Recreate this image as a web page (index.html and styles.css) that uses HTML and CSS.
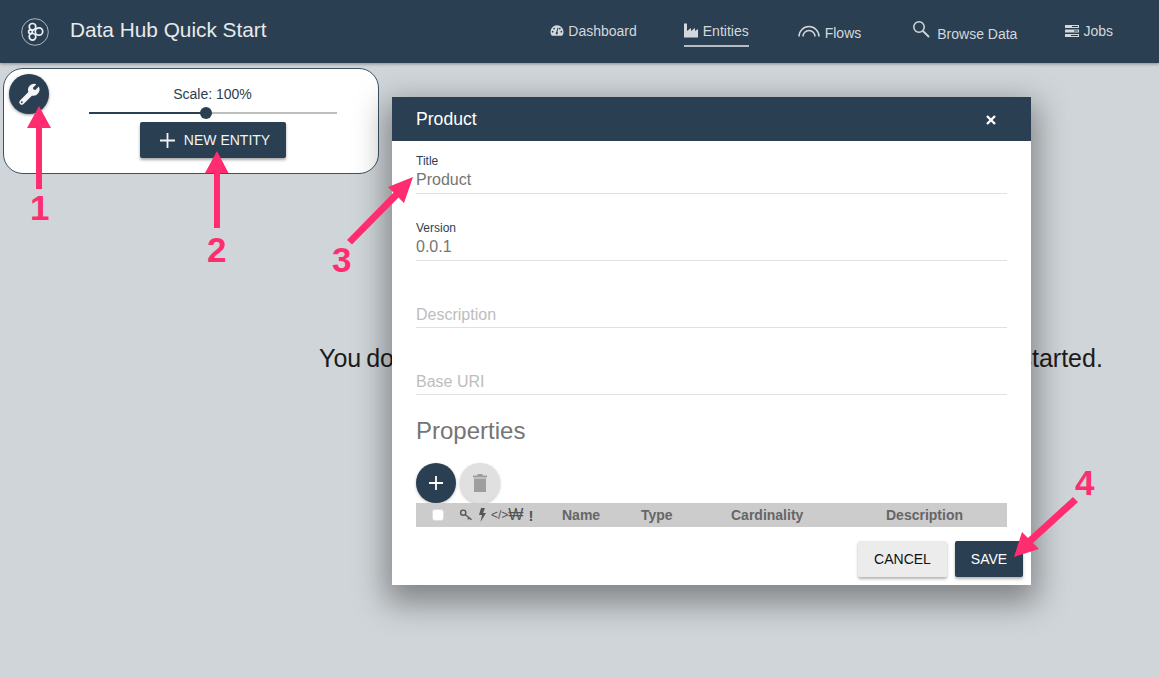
FILE: index.html
```html
<!DOCTYPE html>
<html lang="en">
<head>
<meta charset="utf-8">
<title>Data Hub Quick Start</title>
<link rel="stylesheet" href="styles.css">
</head>
<body>
<header class="topbar">
  <div class="brand">
    <svg class="logo" viewBox="0 0 28 28" width="28" height="28"><circle cx="14" cy="14" r="13.300" fill="none" stroke="#b9c2c9" stroke-width=".9"/><g fill="none" stroke="#eef0f2" stroke-width="1.700"><circle cx="11.500" cy="8.800" r="3.300"/><circle cx="18" cy="13.500" r="3.700"/><circle cx="11.500" cy="18.800" r="3.300"/><circle cx="9.500" cy="13.800" r="1.900"/></g></svg>
    <span class="brand-name">Data Hub Quick Start</span>
  </div>
  <nav class="nav">
    <a class="nav-item nav-dash"><svg viewBox="0 0 16 14" width="14" height="13"><path fill="#d4d8dc" d="M8 1a7.500 7.500 0 0 0-7.500 7.500c0 1.600.5 3.100 1.300 4.300.2.100.4.200.6.200h11.200c.2 0 .4-.1.6-.2.8-1.200 1.300-2.700 1.300-4.300A7.500 7.500 0 0 0 8 1zM3 9.400a1 1 0 1 1 0-2 1 1 0 0 1 0 2zm1.700-3.600a1 1 0 1 1 0-2 1 1 0 0 1 0 2zM8 11.500a1.500 1.500 0 0 1-.8-2.800l1.500-5 1 .3-1.300 4.800A1.500 1.500 0 0 1 8 11.500zm3.200-5.700a1 1 0 1 1 0-2 1 1 0 0 1 0 2zM13 9.400a1 1 0 1 1 0-2 1 1 0 0 1 0 2z"/></svg>Dashboard</a>
    <a class="nav-item nav-ent active"><svg viewBox="0 0 14 14" width="14" height="15"><path fill="#d4d8dc" d="M0 0h3v7.500l4-3v3l4-3v3l3-2V14H0z"/></svg>Entities</a>
    <a class="nav-item nav-flows"><svg viewBox="0 0 22 13" width="22" height="13"><g fill="none" stroke="#d4d8dc" stroke-width="1.500"><path d="M1 12.500a10 10 0 0 1 20 0"/><path d="M5 12.500a6 6 0 0 1 12 0"/></g></svg>Flows</a>
    <a class="nav-item nav-browse"><svg viewBox="0 0 18 18" width="18" height="18"><g fill="none" stroke="#d4d8dc"><circle cx="7" cy="7" r="5.200" stroke-width="1.500"/><path d="M11 11l6 6" stroke-width="1.800"/></g></svg>Browse Data</a>
    <a class="nav-item nav-jobs"><svg viewBox="0 0 14 12" width="14" height="12"><path fill="#d4d8dc" d="M0 0h14v3H0zM0 4.500h14v3H0zM0 9h14v3H0z"/><path fill="#2a3f52" d="M7 1h6v1H7zM9 5.500h4v1H9zM6 10h7v1H6z"/></svg>Jobs</a>
  </nav>
</header>

<main class="content">
  <section class="toolbar">
    <button class="tool-btn" aria-label="Tools"><svg viewBox="0 0 24 24" width="25" height="25"><path fill="#f4f5f6" fill-rule="evenodd" d="M20.900 4.400L17.600 7.700 15.800 7.200 15.300 5.400 18.600 2.100A6 6 0 0 0 10.900 9.700L2.900 17.700A2.400 2.400 0 0 0 6.300 21.100L14.300 13.100A6 6 0 0 0 20.900 4.400ZM4.600 18.500a.9.900 0 1 1 0 1.800.9.900 0 0 1 0-1.800Z"/></svg></button>
    <div class="tool-main">
      <div class="scale-label">Scale: 100%</div>
      <div class="slider"><span class="slider-fill"></span><span class="slider-thumb"></span></div>
      <button class="new-btn"><svg viewBox="0 0 15 15" width="15" height="15"><path fill="none" stroke="#f2f3f4" stroke-width="1.800" d="M7.500 0v15M0 7.500h15"/></svg>NEW ENTITY</button>
    </div>
  </section>
  <p class="empty">You don't have any entities yet. Click the New Entity button to get started.</p>
</main>

<section class="modal">
  <div class="modal-head"><h2>Product</h2><svg class="close" viewBox="0 0 10 10" width="10" height="10"><path fill="none" stroke="#fff" stroke-width="2.400" d="M1 1l8 8M9 1l-8 8"/></svg></div>
  <div class="modal-body">
    <div class="field"><label>Title</label><div class="value">Product</div></div>
    <div class="field"><label>Version</label><div class="value">0.0.1</div></div>
    <div class="field"><label></label><div class="value hint">Description</div></div>
    <div class="field"><label></label><div class="value hint">Base URI</div></div>
    <h3>Properties</h3>
    <div class="fab-row">
      <button class="fab fab-add" aria-label="Add"><svg viewBox="0 0 14 14" width="14" height="14"><path fill="none" stroke="#fff" stroke-width="1.800" d="M7 0v14M0 7h14"/></svg></button>
      <button class="fab fab-del" aria-label="Delete"><svg viewBox="0 0 14 18" width="14" height="18"><path fill="#9e9e9e" d="M5 0h4l1 1.500h4v2H0v-2h4zM1 4.500h12V18H1z"/></svg></button>
    </div>
    <div class="prop-head">
      <span class="check"></span>
      <span class="col-icons">
        <svg viewBox="0 0 14 14" width="14" height="13"><g fill="none" stroke="#555" stroke-width="1.500"><circle cx="4" cy="4" r="2.800"/><path d="M6 6l7 5.500M10.500 9.500l-1.500 1.500"/></g></svg>
        <svg class="bolt" viewBox="0 0 8 14" width="8" height="14"><path fill="#555" d="M3 0h4L5 5h3l-5.500 9L4 7H1z"/></svg>
        <span class="code">&lt;/&gt;</span><span class="won">&#8361;</span><span class="bang">!</span>
      </span>
      <span class="col col-name">Name</span>
      <span class="col col-type">Type</span>
      <span class="col col-card">Cardinality</span>
      <span class="col col-desc">Description</span>
    </div>
    <div class="actions">
      <button class="btn btn-cancel">CANCEL</button>
      <button class="btn btn-save">SAVE</button>
    </div>
  </div>
</section>

<svg class="callouts" width="1159" height="678" viewBox="0 0 1159 678">
  <g fill="#ff2d6f" stroke="none">
    <path d="M36 189V128H27L39 106l12 22H42v61z"/>
    <path d="M214 228V173H205L217 151l11.500 22H220v55z"/>
    <path d="M413 177L388 187 393.500 192.500 347 240 352 244.500 398.500 197.500 404 203z"/>
    <path d="M1014 557L1022 532 1028 538 1073 497 1078 502 1033 543 1039 549z"/>
  </g>
  <g class="num"><text x="30" y="220">1</text><text x="207" y="262">2</text><text x="332" y="272">3</text><text x="1075" y="495">4</text></g>
</svg>
</body>
</html>
```

FILE: styles.css
```css
* { box-sizing: border-box; }
html, body { height: 100%; }
body {
  margin: 0;
  background: #d0d5d9;
  font-family: "Liberation Sans", Arial, sans-serif;
  color: #2a3f52;
  overflow: hidden;
  position: relative;
}
button { font-family: inherit; border: 0; cursor: pointer; padding: 0; }

.topbar {
  height: 63px;
  background: #2a3f52;
  display: flex;
  align-items: center;
  justify-content: space-between;
  box-shadow: 0 1px 3px rgba(0,0,0,.35);
}
.brand { display: flex; align-items: center; padding-left: 21px; gap: 21px; }
.logo { display: block; }
.brand-name { color: #e8eaec; font-size: 20.800px; padding-bottom: 3px; }
.nav { display: flex; align-items: center; height: 100%; color: #d4d8dc; font-size: 14px; padding: 0 46px 2px 0; }
.nav-item { display: flex; align-items: center; gap: 4px; }
.nav-dash { margin-right: 47px; }
.nav-ent { margin-right: 49px; position: relative; gap: 5px; }
.nav-ent.active::after { content: ""; position: absolute; left: 0; right: 0; bottom: -8px; height: 2px; background: #b5bcc2; }
.nav-flows { margin-right: 51px; align-items: flex-end; padding-top: 4px; gap: 5px; }
.nav-flows svg { margin-bottom: 4px; }
.nav-browse { margin-right: 48px; align-items: flex-end; gap: 7px; padding-top: 1px; }
.nav-browse svg { margin-bottom: 4px; }
.nav-jobs { gap: 4px; }

.toolbar {
  margin: 5px 0 0 3px;
  width: 376px;
  height: 106px;
  background: #fff;
  border: 1px solid #3c5264;
  border-radius: 20px;
  display: flex;
  padding: 5px 0 0 5px;
}
.tool-btn {
  width: 40px; height: 40px; border-radius: 50%;
  background: #2a3f52;
  display: flex; align-items: center; justify-content: center;
  box-shadow: 0 1px 3px rgba(0,0,0,.4);
  flex: none;
}
.tool-main { margin-left: 40px; width: 248px; display: flex; flex-direction: column; align-items: center; padding-top: 12px; }
.scale-label { font-size: 14px; line-height: 16px; margin-left: -1px; }
.slider { width: 248px; height: 2px; background: #bdbdbd; margin-top: 10px; position: relative; }
.slider-fill { position: absolute; left: 0; top: 0; height: 2px; width: 117px; background: #2a3f52; }
.slider-thumb { position: absolute; left: 111px; top: -5px; width: 12px; height: 12px; border-radius: 50%; background: #2a3f52; }
.new-btn {
  width: 146px; height: 36px; margin-top: 8px; padding-left: 4px;
  background: #2a3f52; color: #f2f3f4; font-size: 14px;
  border-radius: 2px;
  box-shadow: 0 2px 3px rgba(0,0,0,.35);
  display: flex; align-items: center; justify-content: center; gap: 9px;
}

.empty { margin: 170px 0 0; padding-left: 319px; font-size: 25px; word-spacing: -2px; color: #1c1c1c; white-space: nowrap; line-height: 28px; }

.modal {
  position: absolute; left: 392px; top: 97px;
  width: 639px; height: 488px;
  background: #fff;
  box-shadow: 0 12px 30px 6px rgba(0,0,0,.38);
}
.modal-head {
  height: 44px; background: #2a3f52; color: #fff;
  display: flex; align-items: center; justify-content: space-between;
  padding: 0 35px 0 24px;
}
.modal-head h2 { margin: 0; font-size: 17.600px; font-weight: normal; }
.close { margin-top: 2px; }
.modal-body { padding: 13px 24px 0; }
.field { height: 67px; }
.field label { display: block; font-size: 12px; line-height: 14px; height: 14px; color: #2a3f52; }
.value { font-size: 16px; line-height: 18px; color: #757575; height: 26px; padding-top: 3px; border-bottom: 1px solid #e0e0e0; }
.value.hint { color: #bdbdbd; padding-top: 4px; }
.modal-body h3 { margin: -6px 0 0; font-size: 24px; line-height: 30px; font-weight: normal; color: #757575; }
.fab-row { display: flex; gap: 4px; margin-top: 17px; }
.fab { width: 40px; height: 40px; border-radius: 50%; display: flex; align-items: center; justify-content: center; box-shadow: 0 1px 3px rgba(0,0,0,.25); }
.fab-add { background: #2a3f52; }
.fab-del { background: #e0e0e0; }
.prop-head {
  height: 24px; background: #ccc; display: flex; align-items: center;
  font-size: 14px; font-weight: bold; color: #666; position: relative;
}
.check { width: 12px; height: 12px; background: #fff; border-radius: 3px; margin-left: 16px; flex: none; border: 1px solid #ddd; }
.col-icons { display: flex; align-items: center; margin-left: 15px; color: #555; font-weight: normal; }
.bolt { margin-left: 5px; }
.code { font-size: 12px; margin-left: 5px; }
.won { font-size: 16px; }
.bang { font-size: 15px; font-weight: bold; margin-left: 5px; }
.col { position: absolute; top: 4px; line-height: 16px; }
.col-name { left: 146px; }
.col-type { left: 225px; }
.col-card { left: 315px; }
.col-desc { left: 470px; }
.actions { display: flex; justify-content: flex-end; gap: 8px; margin: 14px -16px 0 0; }
.btn { height: 36px; font-size: 14px; border-radius: 2px; box-shadow: 0 2px 3px rgba(0,0,0,.3); }
.btn-cancel { width: 89px; background: #ececec; color: #111; }
.btn-save { width: 68px; background: #2a3f52; color: #fff; }

.callouts { position: absolute; left: 0; top: 0; pointer-events: none; }
.num text { font-family: "Liberation Sans", Arial, sans-serif; font-size: 35px; font-weight: bold; fill: #ff2d6f; }
```
